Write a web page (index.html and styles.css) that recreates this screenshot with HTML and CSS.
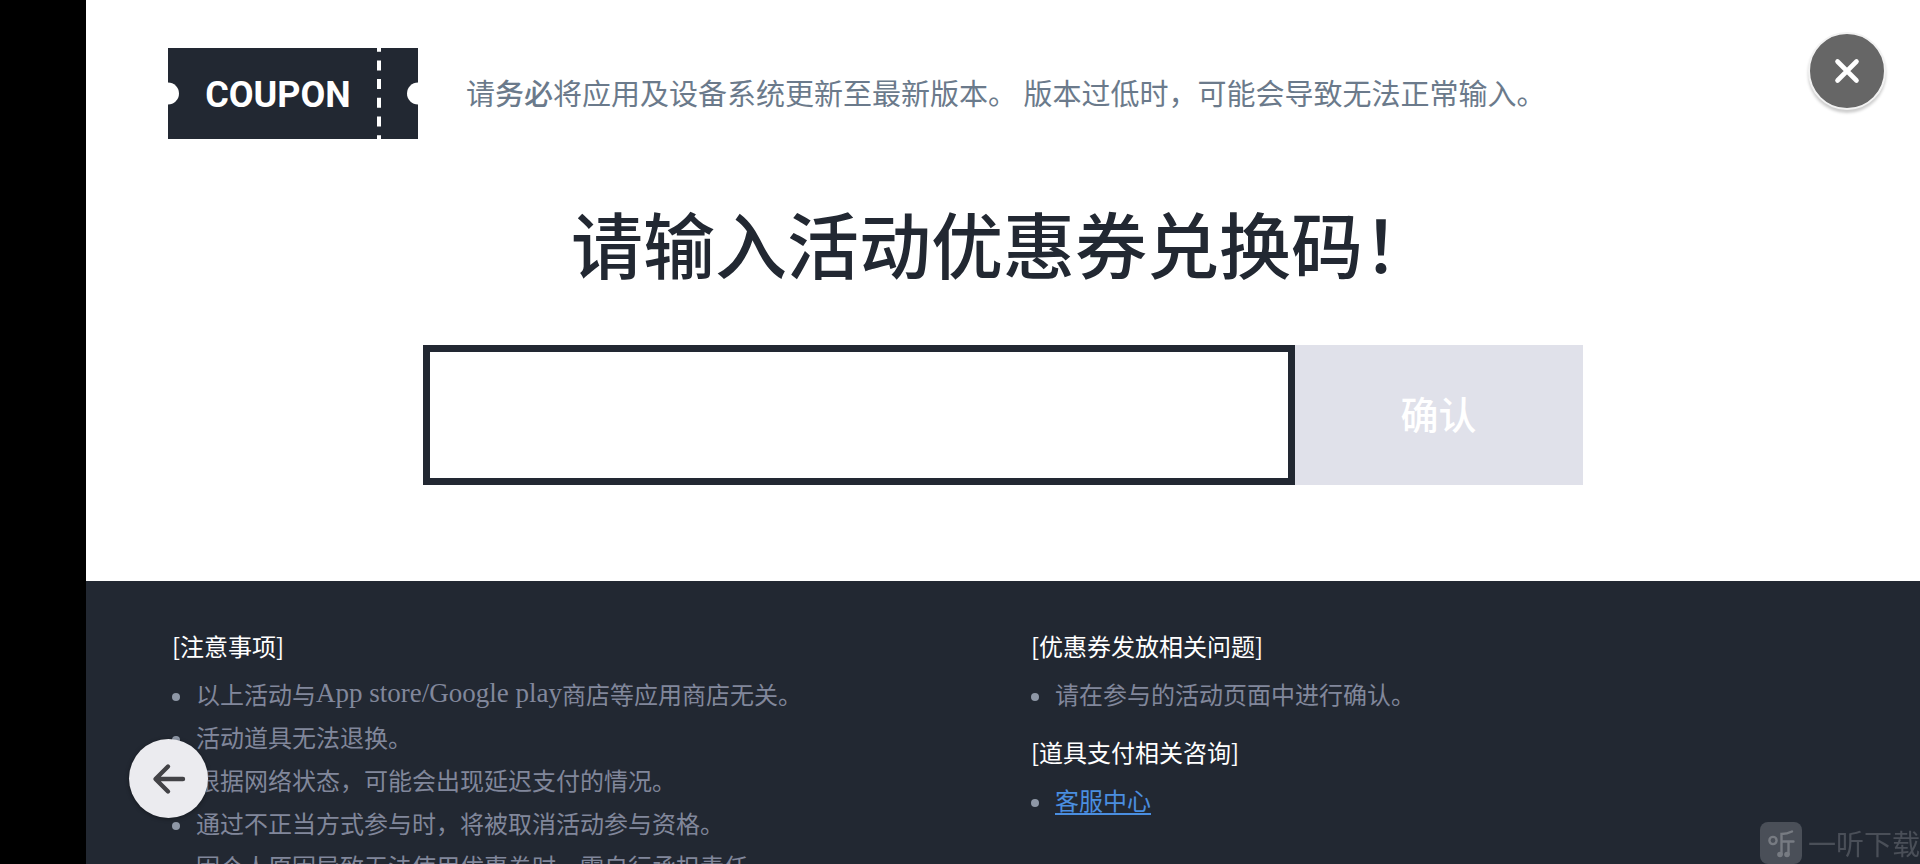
FILE: index.html
```html
<!DOCTYPE html>
<html lang="zh-CN">
<head>
    <meta charset="UTF-8">
    <meta name="viewport" content="width=device-width, initial-scale=1.0">
    <title>优惠券兑换</title>
    <link rel="stylesheet" href="styles.css">
</head>
<body>
<div class="wrapper">
    <div class="side-strip"></div>

    <div class="page">
        <!-- Coupon logo and notice -->
        <header class="header">
            <svg class="coupon" width="250" height="91" viewBox="0 0 250 91" role="img" aria-label="COUPON">
                <rect width="250" height="91" fill="#222832"/>
                <circle cx="0" cy="45.5" r="11" fill="#fff"/>
                <circle cx="250" cy="45.5" r="11" fill="#fff"/>
                <path d="M211 0V91" stroke="#fff" stroke-width="4" stroke-dasharray="10 8.7" stroke-dashoffset="6.3"/>
                <text class="coupon-text" x="110" y="59" text-anchor="middle">COUPON</text>
            </svg>
            <p class="notice">请<b>务必</b>将应用及设备系统更新至最新版本。 版本过低时，可能会导致无法正常输入。</p>
        </header>

        <!-- Code form -->
        <main class="main-content">
            <h1><label for="code">请输入活动优惠券兑换码！</label></h1>
            <form class="code-form">
                <input type="text" id="code" autocomplete="off">
                <button type="submit" disabled>确认</button>
            </form>
        </main>

        <footer class="footer">
            <div class="column">
                <h2>[注意事项]</h2>
                <ul>
                    <li>以上活动与<span class="latin">App store/Google play</span>商店等应用商店无关。</li>
                    <li>活动道具无法退换。</li>
                    <li>根据网络状态，可能会出现延迟支付的情况。</li>
                    <li>通过不正当方式参与时，将被取消活动参与资格。</li>
                    <li>因个人原因导致无法使用优惠券时，需自行承担责任。</li>
                </ul>
            </div>
            <div class="column">
                <h2>[优惠券发放相关问题]</h2>
                <ul>
                    <li>请在参与的活动页面中进行确认。</li>
                </ul>
                <h2>[道具支付相关咨询]</h2>
                <ul>
                    <li><a href="#">客服中心</a></li>
                </ul>
            </div>
        </footer>
    </div>
</div>

<!-- Floating buttons -->
<button class="round-btn close-btn" aria-label="关闭">
    <svg width="26" height="26" viewBox="0 0 26 26" fill="none" stroke="#fff" stroke-width="4.6" stroke-linecap="round">
        <path d="M3.5 3.5l19 19M22.5 3.5l-19 19"/>
    </svg>
</button>
<button class="round-btn back-btn" aria-label="返回">
    <svg width="34" height="32" viewBox="0 0 34 32" fill="none" stroke="#424246" stroke-width="4.4" stroke-linecap="round" stroke-linejoin="round">
        <path d="M16 3.5L3.5 16l12.500 12.500M4 16H31"/>
    </svg>
</button>

<div class="watermark">
    <svg width="42" height="42" viewBox="0 0 42 42" fill="none">
        <rect width="42" height="42" rx="8" fill="#4a4f58"/>
        <g stroke="#777b82" stroke-width="2.4" stroke-linecap="round">
            <circle cx="13" cy="18.5" r="3.6"/>
            <path d="M32 9.5Q27 12 21.5 12V32M22 19.5H33.5M28.5 19.5V32"/>
        </g>
        <circle cx="20" cy="32.5" r="2.8" fill="#777b82"/>
        <circle cx="27" cy="32.5" r="2.8" fill="#777b82"/>
    </svg>
    <span>一听下载</span>
</div>
</body>
</html>
```
FILE: styles.css
```css
* {
    box-sizing: border-box;
}

body {
    margin: 0;
    font-family: "Noto Sans CJK SC", sans-serif;
    background-color: #fff;
    color: #222832;
}

.wrapper {
    display: flex;
    height: 100vh;
    overflow: hidden;
}

.side-strip {
    width: 86px;
    flex-shrink: 0;
    background-color: #000;
}

.page {
    flex: 1;
    display: flex;
    flex-direction: column;
}

/* Header */
.header {
    display: flex;
    align-items: center;
    gap: 48px;
    padding: 48px 82px 0;
}

.coupon {
    flex-shrink: 0;
}

.coupon-text {
    font-family: Roboto, sans-serif;
    font-size: 36px;
    font-weight: 700;
    fill: #fff;
}

.notice {
    margin: 0;
    padding-bottom: 4px;
    font-size: 29px;
    font-weight: 400;
    line-height: 44px;
    color: #6b7a8b;
}

.notice b {
    font-weight: 500;
}

/* Code form */
.main-content {
    padding: 61px 0 96px;
}

.main-content h1 {
    margin: 0 0 61px;
    font-size: 72px;
    font-weight: 500;
    line-height: 84px;
    text-align: center;
}

.code-form {
    display: flex;
    width: 63.2%;
    height: 140px;
    margin: 0 auto;
}

.code-form input {
    flex: 1;
    min-width: 0;
    padding: 0 32px;
    border: 7px solid #222832;
    border-radius: 0;
    outline: none;
    background-color: #fff;
    font-family: inherit;
    font-size: 38px;
}

.code-form button {
    width: 288px;
    padding: 0 0 6px;
    border: none;
    background-color: #e0e1ea;
    color: #fff;
    font-family: inherit;
    font-size: 38px;
    font-weight: 500;
}

/* Footer */
.footer {
    flex: 1 0 auto;
    display: grid;
    grid-template-columns: 1fr 1fr;
    padding: 43px 30px 0 86px;
    background-color: #222832;
    font-size: 24px;
    line-height: 43px;
}

.footer h2 {
    margin: 0 0 5px;
    font-size: 24px;
    font-weight: 400;
    color: #fff;
}

.footer ul {
    list-style: none;
    margin: 0 0 15px;
    padding: 0;
}

.footer li {
    display: flex;
    align-items: center;
    font-weight: 400;
    color: #81879b;
}

.footer li::before {
    content: "";
    width: 8px;
    height: 8px;
    margin: 6px 16px 0 0;
    border-radius: 50%;
    background-color: #8e97a6;
}

.footer .latin {
    font-family: "Liberation Serif", serif;
    font-size: 27px;
}

.footer a {
    color: #4a8ee0;
    text-decoration-thickness: 2px;
    text-underline-offset: 3px;
}

/* Floating buttons */
.round-btn {
    position: fixed;
    display: flex;
    align-items: center;
    justify-content: center;
    padding: 0;
    border-radius: 50%;
    cursor: pointer;
}

.close-btn {
    top: 32px;
    right: 34px;
    width: 78px;
    height: 78px;
    border: 2px solid #f2f2f2;
    background-color: #666;
    box-shadow: 0 3px 3px rgba(0, 0, 0, 0.2);
}

.back-btn {
    left: 129px;
    bottom: 46px;
    width: 79px;
    height: 79px;
    border: none;
    background-color: #ebebef;
    box-shadow: 0 1px 4px rgba(0, 0, 0, 0.4);
}

.watermark {
    position: fixed;
    right: 0;
    bottom: 0;
    display: flex;
    align-items: center;
    gap: 6px;
    font-size: 28px;
    line-height: 42px;
    color: #4a4f58;
}
```
